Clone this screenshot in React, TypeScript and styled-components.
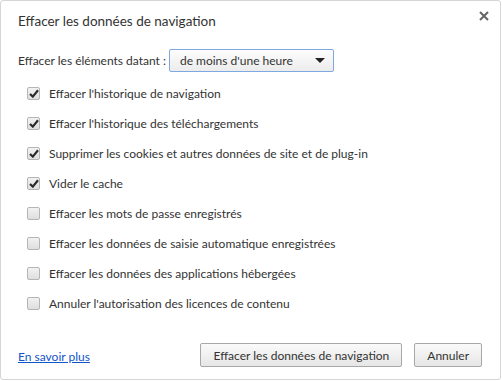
import React from "react";
import styled, { createGlobalStyle } from "styled-components";

const GlobalStyle = createGlobalStyle`
	html, body {
		margin: 0;
		padding: 0;
		background: #ffffff;
	}
	body {
		font-family: Lato, "Open Sans", "Liberation Sans", sans-serif;
		color: #333;
	}
`;

const Dialog = styled.div`
	box-sizing: border-box;
	width: 501px;
	height: 380px;
	border: 1px solid #d6d6d6;
	border-radius: 3px;
	background: #fff;
	position: relative;
	display: flex;
	flex-direction: column;
	padding: 0 18px 0 17px;
`;

const Title = styled.div`
	font-size: 13.5px;
	color: #333;
	margin-top: 9px;
	height: 22px;
	line-height: 22px;
`;

const CloseBtn = styled.div`
	position: absolute;
	top: 9px;
	right: 10px;
	width: 12px;
	height: 12px;
	display: flex;
	align-items: center;
	justify-content: center;
`;

const RangeRow = styled.div`
	display: flex;
	align-items: center;
	gap: 3px;
	margin-top: 17px;
	font-size: 12px;
`;

const Select = styled.div`
	box-sizing: border-box;
	width: 165px;
	height: 23px;
	border: 1px solid #7ea8e0;
	border-radius: 2px;
	background: linear-gradient(#fdfdfd, #ececec);
	display: flex;
	align-items: center;
	justify-content: space-between;
	padding: 0 8px 0 10px;
	font-size: 12px;
	color: #333;
`;

const Arrow = styled.div`
	width: 0;
	height: 0;
	border-left: 5px solid transparent;
	border-right: 5px solid transparent;
	border-top: 5px solid #222;
`;

const List = styled.div`
	display: flex;
	flex-direction: column;
	margin-top: 6px;
	padding-left: 9px;
`;

const Item = styled.label`
	display: flex;
	align-items: center;
	height: 30px;
	font-size: 12px;
	color: #333;
`;

const Box = styled.span<{ checked: boolean }>`
	box-sizing: border-box;
	width: 13px;
	height: 13px;
	border: 1px solid #b5b5b5;
	border-radius: 2px;
	background: linear-gradient(#f2f2f2, #dedede);
	margin-right: 9px;
	display: flex;
	align-items: center;
	justify-content: center;
`;

const Footer = styled.div`
	margin-top: auto;
	margin-bottom: 12px;
	display: flex;
	align-items: center;
`;

const Link = styled.a`
	font-size: 12px;
	color: #1155cc;
	text-decoration: underline;
	margin-right: auto;
	margin-top: 2px;
`;

const Button = styled.button`
	box-sizing: border-box;
	height: 24px;
	padding: 0 12px;
	border: 1px solid #a8a8a8;
	border-radius: 2px;
	background: linear-gradient(#fafafa, #e6e6e6);
	font-family: inherit;
	font-size: 12px;
	color: #333;
	margin-left: 12px;
`;

const items: [string, boolean][] = [
	["Effacer l'historique de navigation", true],
	["Effacer l'historique des téléchargements", true],
	["Supprimer les cookies et autres données de site et de plug-in", true],
	["Vider le cache", true],
	["Effacer les mots de passe enregistrés", false],
	["Effacer les données de saisie automatique enregistrées", false],
	["Effacer les données des applications hébergées", false],
	["Annuler l'autorisation des licences de contenu", false],
];

const Check = () => (
	<svg width="10" height="9" viewBox="0 0 10 9">
		<path d="M1 5 L3.8 7.6 L9 1.2" fill="none" stroke="#2a2a2a" strokeWidth="2.2" />
	</svg>
);

const App = () => {
	return (
		<>
			<GlobalStyle />
			<Dialog>
				<Title>Effacer les données de navigation</Title>
				<CloseBtn>
					<svg width="10" height="10" viewBox="0 0 10 10">
						<path d="M1 1 L9 9 M9 1 L1 9" stroke="#666" strokeWidth="2" />
					</svg>
				</CloseBtn>
				<RangeRow>
					<span>Effacer les éléments datant :</span>
					<Select>
						<span>de moins d'une heure</span>
						<Arrow />
					</Select>
				</RangeRow>
				<List>
					{items.map(([text, checked]) => (
						<Item key={text}>
							<Box checked={checked}>{checked && <Check />}</Box>
							{text}
						</Item>
					))}
				</List>
				<Footer>
					<Link>En savoir plus</Link>
					<Button>Effacer les données de navigation</Button>
					<Button>Annuler</Button>
				</Footer>
			</Dialog>
		</>
	);
};

export default App;
